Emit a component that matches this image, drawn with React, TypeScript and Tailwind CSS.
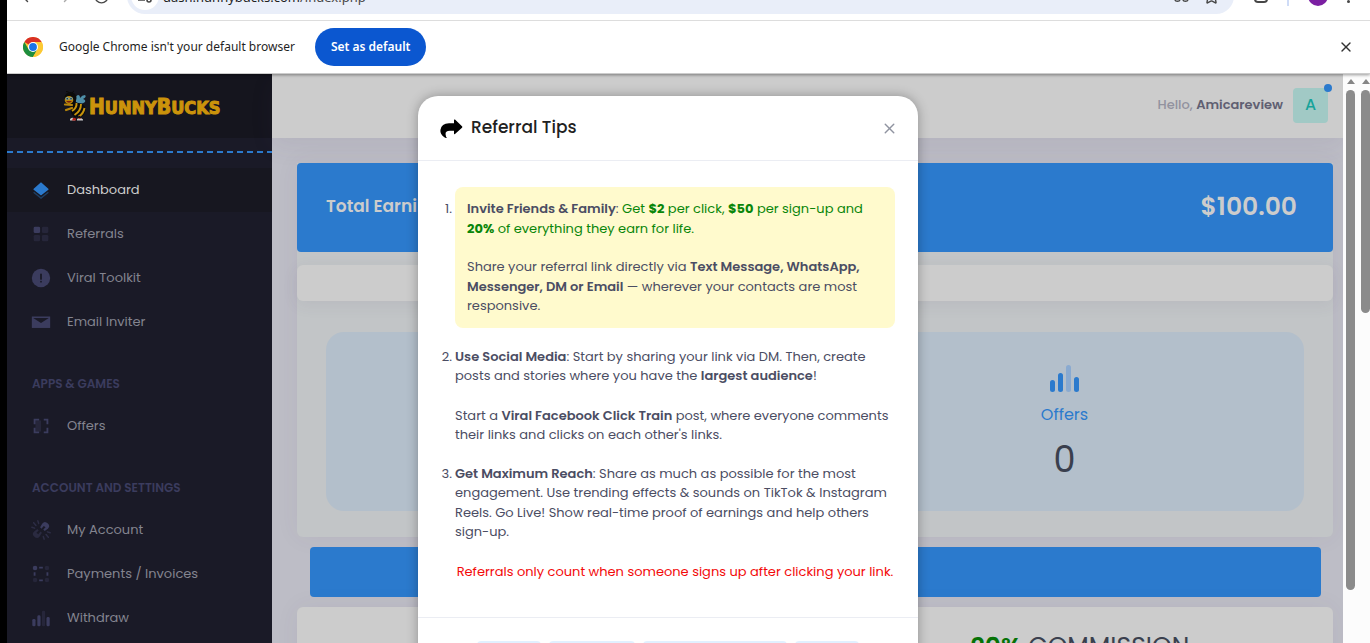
import React from "react";
import { X, Star, RotateCw, ArrowLeft, ArrowRight } from "lucide-react";

const DIM = "#3b3c5e";

function ChromeLogo() {
  return (
    <svg viewBox="0 0 48 48" className="size-5 shrink-0" aria-hidden="true">
      <circle cx="24" cy="24" r="24" fill="#fcc934" />
      <path d="M24 24 L3.2 12 A24 24 0 0 1 44.8 12 Z" fill="#d93025" />
      <path d="M3.2 12 A24 24 0 0 0 24 48 L34.4 30 L24 24 L13.6 30 Z" fill="#1e8e3e" />
      <path d="M24 12 H44.8 A24 24 0 0 1 24 48 L34.4 30 Z" fill="#fcc934" />
      <circle cx="24" cy="24" r="12" fill="#fff" />
      <circle cx="24" cy="24" r="9.4" fill="#1a73e8" />
    </svg>
  );
}

function Bee() {
  return (
    <svg viewBox="0 0 24 32" className="h-8 w-6 shrink-0" aria-hidden="true">
      <path d="M7 4 Q6 1 3 1.500 M9 4 Q9 1.500 11 1" stroke="#0a0a0a" fill="none" />
      <path d="M13 10 Q12 6 15 5 Q17 5 17 8 Q19 5 22 5 Q24 7 20 9 Q23 10 22 12 Q18 15 13 12 Z" fill="#4f8fa8" />
      <circle cx="7.500" cy="8" r="6" fill="#0b0b0b" />
      <ellipse cx="6" cy="10" rx="4.300" ry="4" fill="#b8860b" />
      <circle cx="4.200" cy="8.500" r="1.600" fill="#6fa3b5" />
      <circle cx="8" cy="8.500" r="1.600" fill="#6fa3b5" />
      <circle cx="4.200" cy="8.700" r=".7" fill="#0b0b0b" />
      <circle cx="8" cy="8.700" r=".7" fill="#0b0b0b" />
      <path d="M3 11 Q6 14.500 9 11 Z" fill="#7a1d12" />
      <path d="M9 13 Q19 12 22 17 Q24 25 16 27 Q7 27 8 19 Z" fill="#0b0b0b" />
      <path d="M13.500 13 Q14 18 9 21 M18 14 Q18 21 11.500 25 M21.500 18 Q20.500 24 15.500 26.500" stroke="#c8940c" strokeWidth="1.900" fill="none" />
      <path d="M9 15 L2 14.500 M9 18 L3 20" stroke="#b8860b" strokeWidth="2.200" strokeLinecap="round" />
      <path d="M12 26 L11 29 M16 26 L17 29" stroke="#0b0b0b" strokeWidth="1.600" />
      <path d="M7 29 Q9 27 12 28.500 V30.500 H7 Z" fill="#c9c9c9" />
      <path d="M10 28 Q12 27 13 29 V30.500 H9 Z" fill="#b3221c" />
      <path d="M14 29 Q17 27 20 29.500 V30.500 H14 Z" fill="#c9c9c9" />
      <path d="M15 28.500 Q17 27 18 29 Z" fill="#b3221c" />
    </svg>
  );
}

const ICONS: Record<string, React.ReactNode> = {
  layers: (
    <>
      <path d="M12 3.500 L20 10.600 Q20.600 11.200 20 11.800 L12.700 17.400 Q12 18 11.300 17.400 L4 11.800 Q3.400 11.200 4 10.600 Z" fill="#2b7acd" />
      <path d="M4 14.500 L12 20.700 L20 14.500" fill="none" stroke="#1f3f63" strokeWidth="1.600" />
    </>
  ),
  grid: (
    <>
      <rect x="4" y="4" width="7" height="7" rx="1.5" fill={DIM} />
      <rect x="13" y="4" width="7" height="7" rx="1.5" fill="#26263a" />
      <rect x="4" y="13" width="7" height="7" rx="1.5" fill="#26263a" />
      <rect x="13" y="13" width="7" height="7" rx="1.5" fill="#26263a" />
    </>
  ),
  alert: (
    <>
      <circle cx="12" cy="12" r="10" fill={DIM} />
      <rect x="11" y="7" width="2" height="7" rx="1" fill="#1a1a27" />
      <rect x="11" y="15" width="2" height="2" rx="1" fill="#1a1a27" />
    </>
  ),
  mail: (
    <>
      <rect x="2" y="6" width="20" height="12.500" fill={DIM} />
      <path d="M3.500 7.500 H20.500 L12 13 Z" fill="#1a1a27" />
    </>
  ),
  scan: (
    <>
      <rect x="6" y="6" width="6" height="12" fill="#26263a" />
      <path d="M10 5 H5 V10 M5 14 V19 H10 M15 5 H19 V10 M19 14 V19 H15" fill="none" stroke={DIM} strokeWidth="2" />
    </>
  ),
  link: (
    <>
      <path d="M11 9 L13.500 5 Q16 1.500 19.500 5 Q22.500 8 19.500 10.500 L16 13 L14.500 11.500 L17 9 L15 7.500 L12.500 10.500 Z" fill={DIM} />
      <path d="M13 15 L10.500 19 Q8 22.500 4.500 19 Q1.500 16 4.500 13.500 L8 11 L9.500 12.500 L7 15 L9 16.500 L11.500 13.500 Z" fill="#2a2a40" />
      <path d="M8.500 2 L9.500 5 M4 4 L6.500 7 M2 9 L5 10 M19 14 L22 15 M17.500 17 L20 20 M14.500 19 L15.500 22" stroke="#2d2d45" strokeWidth="1.600" strokeLinecap="round" />
    </>
  ),
  bounds: (
    <>
      <circle cx="5.500" cy="5.500" r="2.500" fill={DIM} />
      <circle cx="18.500" cy="5.500" r="2.500" fill="#26263a" />
      <circle cx="5.500" cy="18.500" r="2.500" fill="#26263a" />
      <circle cx="18.500" cy="18.500" r="2.500" fill="#26263a" />
      <path d="M10 5 H14 M10 19 H14 M5 10 V14 M19 10 V14" stroke={DIM} strokeWidth="2" />
    </>
  ),
  bars: (
    <>
      <rect x="2.500" y="13" width="3.500" height="8" rx="1.500" fill={DIM} />
      <rect x="8" y="9" width="3.500" height="12" rx="1.500" fill={DIM} />
      <rect x="13" y="4" width="3.500" height="17" rx="1.500" fill="#26263a" />
      <rect x="18" y="11" width="3.500" height="10" rx="1.500" fill={DIM} />
    </>
  ),
};

function NavItem({ icon, label, active = false }: { icon: string; label: string; active?: boolean }) {
  return (
    <li>
      <a
        href="#"
        className={
          active
            ? "flex h-11 items-center gap-3.5 bg-[#171720] px-[22px] text-[#cdcdcd]"
            : "flex h-11 items-center gap-3.5 px-[22px] text-[#83848f]"
        }
      >
        <svg viewBox="0 0 24 24" className="size-6 shrink-0 p-px" aria-hidden="true">
          {ICONS[icon]}
        </svg>
        <span>{label}</span>
      </a>
    </li>
  );
}

function NavHeading({ children }: { children: React.ReactNode }) {
  return <li className="mt-5 flex h-10 items-center px-[25px] text-[12px] font-semibold text-[#3b3c5e]">{children}</li>;
}

function BrowserBars() {
  return (
    <div className="relative z-10 shrink-0 bg-white font-['Noto_Sans',sans-serif] shadow-[0_1px_3px_rgba(0,0,0,0.4)]">
      <div className="flex h-[21px] items-end overflow-hidden border-b border-[#dddddd] pr-3 pb-1.5">
        <div className="flex h-9 w-[120px] shrink-0 items-center gap-5 pl-3 text-[#474747]">
          <ArrowLeft size={17} />
          <ArrowRight size={17} className="text-[#aaaaaa]" />
          <RotateCw size={17} />
        </div>
        <div className="flex h-9 min-w-0 flex-1 items-center rounded-full bg-[#e9eef9] pr-3.5 pl-1">
          <span className="flex size-7 items-center justify-center rounded-full bg-white">
            <svg viewBox="0 0 16 16" className="size-4" fill="none" stroke="#474747" strokeWidth="1.600" aria-hidden="true">
              <circle cx="4" cy="4" r="2" />
              <path d="M8 4 H15 M1 12 H8" />
              <circle cx="12" cy="12" r="2" />
            </svg>
          </span>
          <span className="flex-1 pt-1 pl-1 text-[13px] text-[#474747]">
            <span className="text-[#1f1f1f]">dash.hunnybucks.com</span>/index.php
          </span>
          <svg viewBox="0 0 20 18" className="mr-3 h-4 w-5" fill="none" stroke="#474747" strokeWidth="1.600" aria-hidden="true">
            <circle cx="6" cy="12" r="3" />
            <circle cx="15" cy="12" r="3" />
          </svg>
          <Star size={17} className="text-[#474747]" />
        </div>
        <div className="flex h-9 w-[124px] shrink-0 items-center gap-[19px] pl-5">
          <span className="size-3.5 rounded-sm border-2 border-[#474747]" />
          <span className="h-5 w-0.5 bg-[#cfdcf7]" />
          <span className="flex size-5 items-center justify-center rounded-full bg-[#7b1fa2] text-[11px] text-white">A</span>
          <span className="flex flex-col gap-0.5">
            <i className="size-[3px] rounded-full bg-[#474747]" />
            <i className="size-[3px] rounded-full bg-[#474747]" />
            <i className="size-[3px] rounded-full bg-[#474747]" />
          </span>
        </div>
      </div>
      <div className="flex h-[53px] items-center border-b border-[#cccccc] px-4">
        <ChromeLogo />
        <span className="pl-4 text-[12px] whitespace-nowrap text-[#1f1f1f]">Google Chrome isn't your default browser</span>
        <button type="button" className="ml-5 h-[38px] rounded-full bg-[#0b57d0] px-4 text-[12px] font-semibold whitespace-nowrap text-white">
          Set as default
        </button>
        <button type="button" aria-label="Close" className="ml-auto text-[#333333]">
          <X size={16} strokeWidth={2} />
        </button>
      </div>
    </div>
  );
}

function Sidebar() {
  return (
    <aside className="w-[265px] shrink-0 bg-[#1a1a27] text-[13px]">
      <div className="flex h-16 items-center gap-0.5 bg-[#15151e] pl-14">
        <Bee />
        <span className="pt-1 font-['DejaVu_Sans_Condensed','DejaVu_Sans',sans-serif] text-[18px] font-bold whitespace-nowrap text-[#cb930b] [-webkit-text-stroke:1px_#cb930b]">
          <span className="text-[21px]">H</span>UNNY<span className="text-[21px]">B</span>UCKS
        </span>
      </div>
      <nav className="mt-[13px]">
        <svg className="block h-0.5 w-full" aria-hidden="true">
          <line x1="0" y1="1" x2="100%" y2="1" stroke="#2b7acd" strokeWidth="2" strokeDasharray="6 4" />
        </svg>
        <ul className="pt-[15px]">
          <NavItem icon="layers" label="Dashboard" active />
          <NavItem icon="grid" label="Referrals" />
          <NavItem icon="alert" label="Viral Toolkit" />
          <NavItem icon="mail" label="Email Inviter" />
          <NavHeading>APPS &amp; GAMES</NavHeading>
          <NavItem icon="scan" label="Offers" />
          <NavHeading>ACCOUNT AND SETTINGS</NavHeading>
          <NavItem icon="link" label="My Account" />
          <NavItem icon="bounds" label="Payments / Invoices" />
          <NavItem icon="bars" label="Withdraw" />
        </ul>
      </nav>
    </aside>
  );
}

function Content() {
  return (
    <main className="min-w-0 flex-1 bg-[#bdbdc6]">
      <header className="flex h-16 items-center justify-end gap-2.5 bg-[#cccccc] pr-[15px] pb-0.5 text-[13px] shadow-[0_8px_24px_rgba(82,63,105,0.08)]">
        <span className="font-medium text-[#92929f]">
          Hello, <b className="font-semibold text-[#605f72]">Amicareview</b>
        </span>
        <span className="relative flex size-[35px] items-center justify-center rounded bg-[#a1c9c5] text-[16px] font-medium text-[#16a39a]">
          A
          <i className="absolute -top-1 -right-1 size-2 rounded-full bg-[#2b7acd]" />
        </span>
      </header>
      <div className="pt-[25px] pr-2.5 pl-[25px]">
        <section className="rounded-b-md bg-[#c2c5c7] shadow-[0_0_24px_rgba(82,63,105,0.06)]">
          <div className="flex h-[89px] items-center justify-between rounded bg-[#2b7acd] pr-9 pb-0.5 pl-[29px] text-[#cccccc]">
            <h2 className="text-[17px] font-semibold">Total Earnings</h2>
            <span className="text-[25px] font-semibold">$100.00</span>
          </div>
          <div className="mt-[13px] h-9 rounded-md bg-[#cccccc] shadow-[0_4px_16px_rgba(82,63,105,0.08)]" />
          <div className="px-[29px] pt-[31px] pb-[26px]">
            <div className="grid h-[179px] grid-cols-2 rounded-[18px] bg-[#b3bfcb] pl-5">
              <div />
              <div className="flex flex-col items-center pt-[31px]">
                <svg viewBox="0 0 32 30" className="h-[30px] w-8" aria-hidden="true">
                  <rect x="1" y="17" width="5" height="12" rx="2.500" fill="#2b7acd" />
                  <rect x="9" y="10" width="5" height="19" rx="2.500" fill="#2b7acd" />
                  <rect x="17" y="2" width="5" height="27" rx="2.500" fill="#8aaad0" />
                  <rect x="25" y="14" width="5" height="15" rx="2.500" fill="#2b7acd" />
                </svg>
                <span className="mt-2.5 text-[16px] leading-6 text-[#2b7acd]">Offers</span>
                <span className="mt-2 text-[35px] leading-[50px] text-[#3a3f4e]">0</span>
              </div>
            </div>
          </div>
        </section>
        <div className="mr-3 ml-[13px] mt-2.5 h-[50px] rounded bg-[#2b7acd]" />
        <section className="mt-2.5 flex h-40 rounded-md bg-[#cccccc] shadow-[0_0_24px_rgba(82,63,105,0.06)]">
          <div className="w-[54%]" />
          <p className="flex-1 pt-[26px] pl-[114px] text-[25px] leading-7 whitespace-nowrap text-[#3a3f4e]">
            <b className="font-semibold text-[#067206]">20%</b> COMMISSION
          </p>
        </section>
      </div>
    </main>
  );
}

function Scrollbar({ thumb }: { thumb: string }) {
  return (
    <div className="flex w-[9px] flex-col items-center gap-1.5 pt-[5px]">
      <i className="size-0 border-x-4 border-b-5 border-x-transparent border-b-[#858585]" />
      <i className={thumb} />
    </div>
  );
}

function TipsDialog() {
  return (
    <section
      role="dialog"
      aria-labelledby="tips-title"
      className="w-[500px] rounded-t-[20px] bg-white text-[13px] text-[#4b4d63] shadow-[0_0_12px_rgba(0,0,0,0.3)]"
    >
      <header className="flex h-[65px] items-center border-b border-[#ebedf3] px-[22px]">
        <svg viewBox="0 0 24 20" className="mt-0.5 h-5 w-6" aria-hidden="true">
          <path d="M14 1 Q14 0 15 .6 L22 7.200 Q22.800 8 22 8.800 L15 15 Q14 15.600 14 14.600 V11.800 H10 Q5 11.800 5.600 15.500 Q5.800 18 7 18.600 Q6 19.500 4 18 Q0 15 .4 11 Q1.400 4.200 9 4.200 H14 Z" fill="#000" />
        </svg>
        <h1 id="tips-title" className="pl-[7px] text-[17px] font-medium text-[#212121]">Referral Tips</h1>
        <button type="button" aria-label="Close" className="-mr-1 ml-auto p-0.5 text-[#8f93a0]">
          <X size={17} strokeWidth={2} />
        </button>
      </header>
      <ol className="pt-[26px] pr-[23px] pb-9 pl-[37px] leading-normal whitespace-nowrap">
        <li className="relative mb-[19px] rounded-lg bg-[#fffacd] p-3">
          <span className="absolute right-full pr-[3px]">1.</span>
          <p className="text-[#0a860a]">
            <b className="font-semibold text-[#4b4d63]">Invite Friends &amp; Family</b>
            <span className="text-[#4b4d63]">:</span> Get <b>$2</b> per click, <b>$50</b> per sign-up and
            <br />
            <b>20%</b> of everything they earn for life.
          </p>
          <p className="mt-[19px]">
            Share your referral link directly via <b className="font-semibold">Text Message, WhatsApp,</b>
            <br />
            <b className="font-semibold">Messenger, DM or Email</b> — wherever your contacts are most
            <br />
            responsive.
          </p>
        </li>
        <li className="relative mb-[19px]">
          <span className="absolute right-full pr-[3px]">2.</span>
          <p>
            <b className="font-semibold">Use Social Media</b>: Start by sharing your link via DM. Then, create
            <br />
            posts and stories where you have the <b className="font-semibold">largest audience</b>!
          </p>
          <p className="mt-5">
            Start a <b className="font-semibold">Viral Facebook Click Train</b> post, where everyone comments
            <br />
            their links and clicks on each other's links.
          </p>
        </li>
        <li className="relative">
          <span className="absolute right-full pr-[3px]">3.</span>
          <p>
            <b className="font-semibold">Get Maximum Reach</b>: Share as much as possible for the most
            <br />
            engagement. Use trending effects &amp; sounds on TikTok &amp; Instagram
            <br />
            Reels. Go Live! Show real-time proof of earnings and help others
            <br />
            sign-up.
          </p>
          <p className="mt-5 text-center text-[#f30a0a]">Referrals only count when someone signs up after clicking your link.</p>
        </li>
      </ol>
      <footer className="flex justify-center gap-2 border-t border-[#ebedf3] pt-[23px]">
        <span className="h-10 w-16 rounded bg-[#e1f0ff]" />
        <span className="h-10 w-[86px] rounded bg-[#e1f0ff]" />
        <span className="h-10 w-[144px] rounded bg-[#e1f0ff]" />
        <span className="h-10 w-16 rounded bg-[#e1f0ff]" />
      </footer>
    </section>
  );
}

export default function App() {
  return (
    <div className="flex h-screen flex-col overflow-hidden bg-black pl-[7px] font-['Poppins','Inter',sans-serif]">
      <BrowserBars />
      <div className="relative flex min-h-0 flex-1 overflow-hidden">
        <Sidebar />
        <Content />
        <div className="flex shrink-0 gap-1.5 bg-[#fcfcfc] pl-[3px]">
          <Scrollbar thumb="h-[500px] w-[9px] rounded-full bg-[#8b8b8b]" />
          <Scrollbar thumb="h-[223px] w-[9px] rounded-full bg-[#8b8b8b]" />
        </div>
        <div className="absolute inset-0 flex items-start justify-center pt-[22px] pr-[41px]">
          <TipsDialog />
        </div>
      </div>
    </div>
  );
}
